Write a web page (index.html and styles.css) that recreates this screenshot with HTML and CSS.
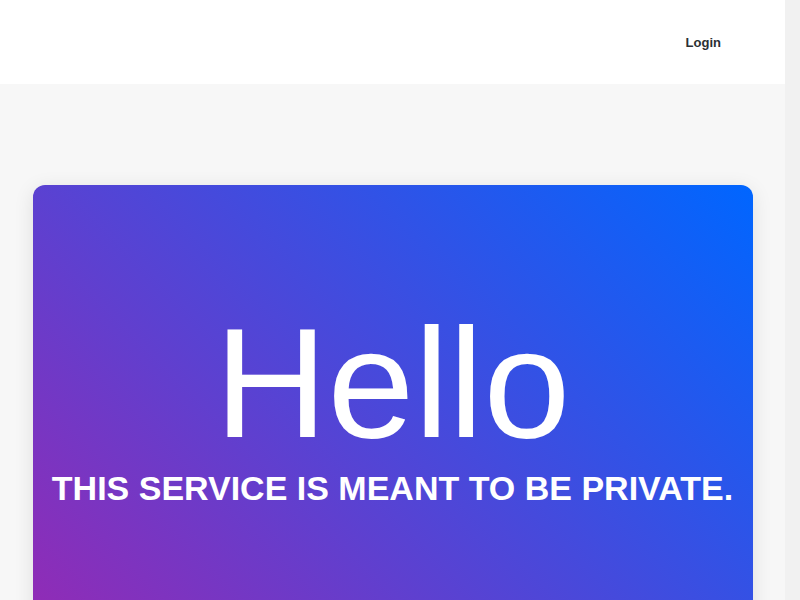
FILE: index.html
```html
<!DOCTYPE html>
<html lang="en">
<head>
    <meta charset="UTF-8">
    <meta name="viewport" content="width=device-width, initial-scale=1.0">
    <title>Hello</title>
    <link rel="stylesheet" href="styles.css">
</head>
<body>

<div class="shell">
    <header class="topbar">
        <nav class="nav">
            <a href="#" class="nav-link">Login</a>
        </nav>
    </header>

    <main class="page">
        <section class="hero-card">
            <h1 class="hero-title">Hello</h1>
            <h2 class="hero-subtitle">THIS SERVICE IS MEANT TO BE PRIVATE.</h2>
        </section>
    </main>
</div>

</body>
</html>
```

FILE: styles.css
```css
body {
    font-family: "Liberation Sans", Arial, sans-serif;
    margin: 0;
    padding: 0 15px 0 0;
    background-color: #f1f1f1;
    color: #333;
}

.shell {
    background-color: #f7f7f7;
}

/* Top bar */
.topbar {
    background-color: #fff;
    height: 84px;
    display: flex;
    align-items: center;
    justify-content: flex-end;
    padding: 0 64px 0 32px;
}

.nav-link {
    font-size: 13px;
    font-weight: bold;
    color: #2b2f33;
    text-decoration: none;
}

/* Main card */
.page {
    padding: 101px 32px 100px;
}

.hero-card {
    max-width: 720px;
    min-height: 515px;
    margin: 0 auto;
    padding-top: 120px;
    box-sizing: border-box;
    border-radius: 12px;
    background: linear-gradient(45deg, #9c27b0, #0066ff);
    box-shadow: 0 4px 20px rgba(0, 0, 0, 0.1);
    color: #fff;
    text-align: center;
}

.hero-title {
    font-size: 156px;
    font-weight: normal;
    line-height: 1;
    margin: 0;
}

.hero-subtitle {
    font-size: 34px;
    font-weight: bold;
    line-height: 1.2;
    margin: 7px 0 0;
}
```
